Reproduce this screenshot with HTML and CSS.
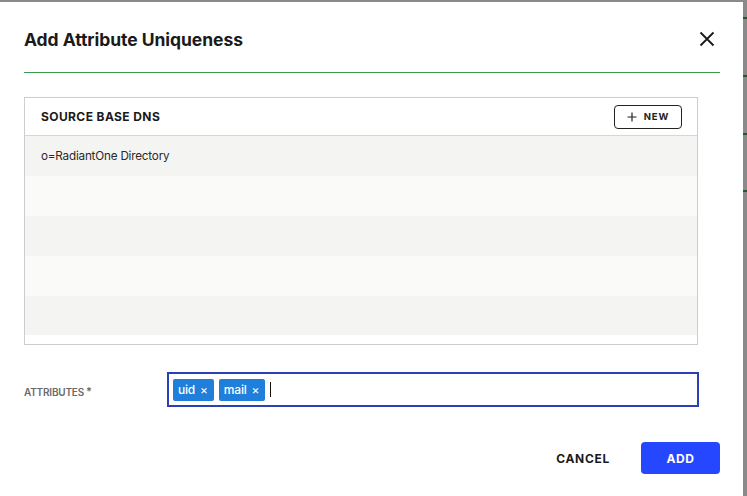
FILE: index.html
```html
<!DOCTYPE html>
<html>
<head>
<meta charset="utf-8">
<link rel="stylesheet" href="styles.css">
</head>
<body>
<div class="backdrop">
  <div class="dialog">
    <div class="dialog-head">
      <h1 class="title">Add Attribute Uniqueness</h1>
      <button class="close" aria-label="Close">
        <svg width="16" height="16" viewBox="0 0 16 16"><path d="M1.5 1.5L14.5 14.5M14.5 1.5L1.5 14.5" stroke="#1a1a1a" stroke-width="1.8" fill="none"/></svg>
      </button>
    </div>
    <div class="rule"></div>
    <div class="table">
      <div class="table-head">
        <span class="th">SOURCE BASE DNS</span>
        <button class="btn-new"><svg width="10" height="10" viewBox="0 0 10 10"><path d="M5 0.5V9.5M0.5 5H9.5" stroke="#222" stroke-width="1.2"/></svg><span>NEW</span></button>
      </div>
      <div class="rows">
        <div class="row odd">o=RadiantOne Directory</div>
        <div class="row even"></div>
        <div class="row odd"></div>
        <div class="row even"></div>
        <div class="row odd"></div>
      </div>
    </div>
    <div class="field">
      <label class="field-label">ATTRIBUTES<sup>*</sup></label>
      <div class="tag-input">
        <span class="chip">uid <span class="x">×</span></span>
        <span class="chip">mail <span class="x">×</span></span>
        <span class="caret"></span>
      </div>
    </div>
    <div class="actions">
      <button class="btn-cancel">CANCEL</button>
      <button class="btn-add">ADD</button>
    </div>
  </div>
</div>
</body>
</html>
```
FILE: styles.css
```css
html, body {
  margin: 0;
  padding: 0;
  height: 100%;
}
body {
  background-color: #8a8a8a;
  background-image:
    linear-gradient(#1f5a2a, #1f5a2a),
    linear-gradient(#1f5a2a, #1f5a2a),
    linear-gradient(#1f5a2a, #1f5a2a),
    linear-gradient(#1f5a2a, #1f5a2a);
  background-size: 4px 2px;
  background-repeat: no-repeat;
  background-position: 743px 17px, 743px 75px, 743px 133px, 743px 190px;
  font-family: Inter, "Noto Sans", "Liberation Sans", sans-serif;
  overflow: hidden;
}
.backdrop {
  padding-top: 2px;
  height: 494px;
}
.dialog {
  width: 743px;
  height: 494px;
  background: #fff;
  box-sizing: border-box;
  padding: 0 23px 0 24px;
  display: flex;
  flex-direction: column;
}
.dialog-head {
  display: flex;
  align-items: center;
  justify-content: space-between;
  height: 70px;
  padding: 4px 5px 0 0;
  box-sizing: border-box;
}
.title {
  margin: 0;
  font-size: 17.5px;
  font-weight: 700;
  color: #1a1a1a;
  letter-spacing: -0.05px;
}
.close {
  border: 0;
  background: none;
  padding: 0;
  width: 16px;
  height: 16px;
  display: flex;
  cursor: pointer;
}
.rule {
  height: 1px;
  background: #3a9a4c;
}
.table {
  margin-top: 24px;
  width: 674px;
  height: 248px;
  box-sizing: border-box;
  border: 1px solid #cdcdcd;
  display: flex;
  flex-direction: column;
}
.table-head {
  height: 37px;
  border-bottom: 1px solid #d6d6d6;
  display: flex;
  align-items: center;
  justify-content: space-between;
  padding: 0 15px 0 16px;
  flex-shrink: 0;
}
.th {
  font-size: 12px;
  font-weight: 700;
  color: #1a1a1a;
  letter-spacing: 0.4px;
}
.btn-new {
  height: 24px;
  width: 68px;
  box-sizing: border-box;
  border: 1px solid #222;
  border-radius: 4px;
  background: #fff;
  display: flex;
  align-items: center;
  justify-content: center;
  gap: 7px;
  font-family: inherit;
  font-size: 9.5px;
  font-weight: 700;
  letter-spacing: 0.9px;
  color: #222;
  padding: 0;
}
.rows {
  display: flex;
  flex-direction: column;
}
.row {
  height: 40px;
  display: flex;
  align-items: center;
  padding-left: 16px;
  font-size: 11.7px;
  color: #2a2a2a;
  letter-spacing: -0.2px;
}
.row:last-child {
  height: 39px;
}
.odd { background: #f4f4f2; }
.even { background: #fafaf9; }
.field {
  margin-top: 27px;
  display: flex;
  align-items: center;
}
.field-label {
  width: 143px;
  font-size: 10px;
  font-weight: 600;
  color: #6a6a6a;
  letter-spacing: -0.2px;
  padding-top: 3px;
}
.field-label sup {
  font-size: 11px;
  vertical-align: 1px;
  margin-left: 2px;
}
.tag-input {
  width: 532px;
  height: 35px;
  box-sizing: border-box;
  border: 2px solid #2b40b4;
  display: flex;
  align-items: center;
  gap: 5px;
  padding-left: 4px;
}
.chip {
  background: #1f7fdb;
  color: #fff;
  height: 22px;
  border-radius: 2px;
  display: flex;
  align-items: center;
  padding: 0 6px 0 5px;
  font-size: 12px;
  font-weight: 500;
  gap: 5px;
  letter-spacing: -0.2px;
}
.chip .x {
  font-size: 12px;
  font-weight: 400;
}
.caret {
  width: 1px;
  height: 15px;
  background: #111;
}
.actions {
  margin-top: 35px;
  display: flex;
  justify-content: flex-end;
  align-items: center;
  gap: 13px;
}
.btn-cancel {
  border: 0;
  background: none;
  font-family: inherit;
  font-size: 12px;
  font-weight: 700;
  letter-spacing: 0.7px;
  color: #1a1a1a;
  padding: 0 18px;
  height: 32px;
}
.btn-add {
  width: 79px;
  height: 32px;
  border: 0;
  border-radius: 4px;
  background: #2447ff;
  color: #fff;
  font-family: inherit;
  font-size: 12px;
  font-weight: 700;
  letter-spacing: 0.6px;
}
```
